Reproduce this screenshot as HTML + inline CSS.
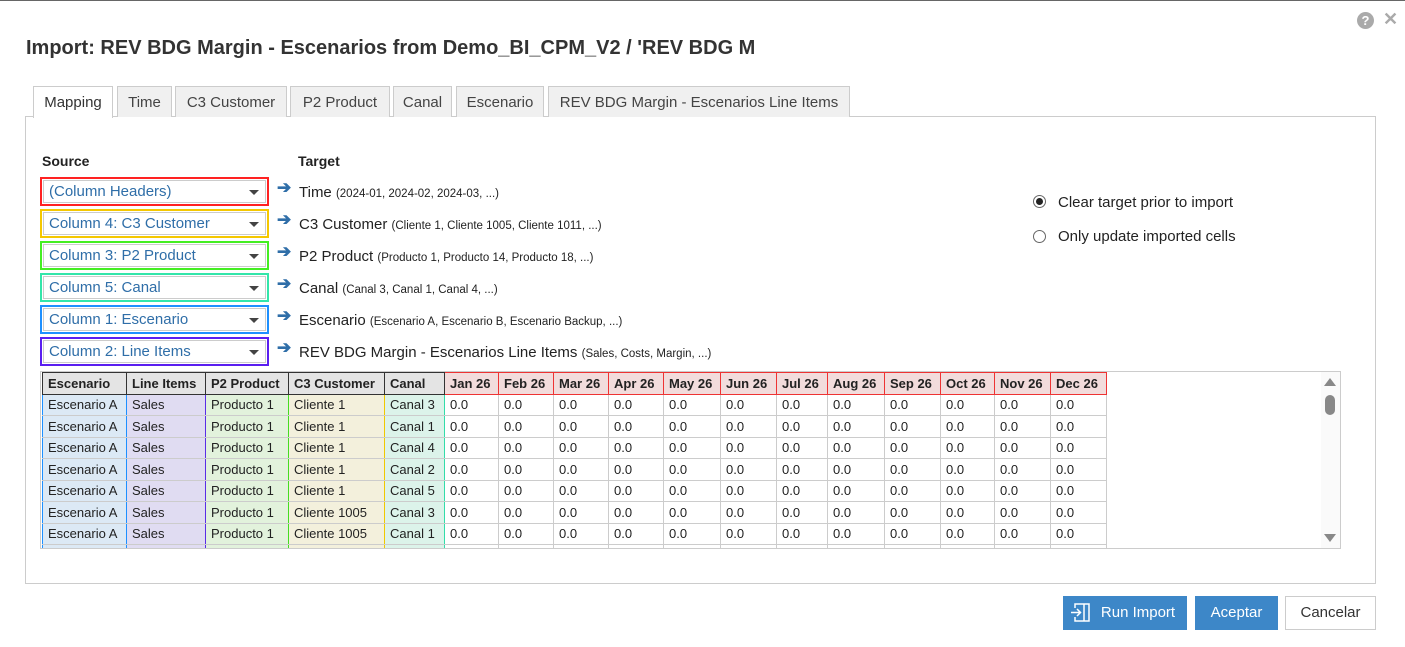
<!DOCTYPE html>
<html><head><meta charset="utf-8"><style>
*{box-sizing:border-box;margin:0;padding:0}
body{width:1405px;height:647px;background:#fff;font-family:"Liberation Sans",Arial,sans-serif;position:relative;overflow:hidden;color:#222}
.a{position:absolute}
.tab{position:absolute;top:86px;height:31px;border:1px solid #ccc;border-bottom:none;background:#f0f0f0;font-size:15px;color:#444;text-align:center;line-height:31px}
.sel{position:absolute;left:40px;width:229px;height:29px;border:2px solid}
.sel div{position:absolute;left:1px;top:1px;right:1px;bottom:1px;border:1px solid #ccc;color:#2f6ea8;font-size:15px;line-height:21px;padding-left:5px}
.sel div:after{content:"";position:absolute;right:6px;top:9px;border-left:5px solid transparent;border-right:5px solid transparent;border-top:5px solid #444}
.arr{position:absolute;left:277px;color:#2f6ea8;font-size:17px;font-weight:bold}
.tg{position:absolute;left:299px;font-size:15px;color:#222}
.tg small{font-size:11.5px}
table{position:absolute;left:42px;top:372px;border-collapse:collapse;font-size:13px}
td,th{border:1px solid #ccc;height:21.5px;padding:0 5px;white-space:nowrap;text-align:left}
th{background:#e4e4e4;border:1px solid #333;font-weight:bold}
th.m{background:#f2dcdc;border-color:#e33}
.c1{background:#dce9f5;border-left:1px solid #1e90ff;border-right:1px solid #1e90ff}
.c2{background:#e0dcf2;border-left:1px solid #5a2ee6;border-right:1px solid #5a2ee6}
.c3{background:#e2f2dc;border-left:1px solid #44dd22;border-right:1px solid #44dd22}
.c4{background:#f3f0dc;border-left:1px solid #f0c800;border-right:1px solid #f0c800}
.c5{background:#dcf3ea;border-left:1px solid #33ddaa;border-right:1px solid #33ddaa}
.btn{position:absolute;top:596px;height:34px;font-size:15px;line-height:30px;padding-top:2px;text-align:center}
</style></head><body>
<div class="a" style="left:0;top:0;width:1405px;height:1px;background:#666"></div>
<div class="a" style="left:1357px;top:12px;width:17px;height:17px;border-radius:50%;background:#aaa;color:#fff;font-size:13px;font-weight:bold;text-align:center;line-height:17px">?</div>
<div class="a" style="left:1383px;top:9px;color:#aaa;font-size:18px;font-weight:bold">✕</div>
<div class="a" style="left:26px;top:37px;font-size:20px;font-weight:bold;color:#333">Import: REV BDG Margin - Escenarios from Demo_BI_CPM_V2 / 'REV BDG M</div>

<div class="a" style="left:25px;top:116px;width:1351px;height:468px;border:1px solid #ccc"></div>
<div class="tab" style="left:33px;width:80px;background:#fff;height:32px;color:#333">Mapping</div>
<div class="tab" style="left:117px;width:55px">Time</div>
<div class="tab" style="left:175px;width:112px">C3 Customer</div>
<div class="tab" style="left:290px;width:100px">P2 Product</div>
<div class="tab" style="left:393px;width:59px">Canal</div>
<div class="tab" style="left:456px;width:88px">Escenario</div>
<div class="tab" style="left:548px;width:302px">REV BDG Margin - Escenarios Line Items</div>

<div class="a" style="left:42px;top:153px;font-size:14px;font-weight:bold">Source</div>
<div class="a" style="left:298px;top:153px;font-size:14px;font-weight:bold">Target</div>

<div class="sel" style="top:177px;border-color:#f22"><div>(Column Headers)</div></div>
<div class="sel" style="top:209px;border-color:#f5c800"><div>Column 4: C3 Customer</div></div>
<div class="sel" style="top:241px;border-color:#44ee22"><div>Column 3: P2 Product</div></div>
<div class="sel" style="top:273px;border-color:#33e6aa"><div>Column 5: Canal</div></div>
<div class="sel" style="top:305px;border-color:#1e90ff"><div>Column 1: Escenario</div></div>
<div class="sel" style="top:337px;border-color:#5a1ef0"><div>Column 2: Line Items</div></div>

<div class="arr" style="top:178px">➔</div><div class="tg" style="top:184px">Time <small>(2024-01, 2024-02, 2024-03, ...)</small></div>
<div class="arr" style="top:210px">➔</div><div class="tg" style="top:216px">C3 Customer <small>(Cliente 1, Cliente 1005, Cliente 1011, ...)</small></div>
<div class="arr" style="top:242px">➔</div><div class="tg" style="top:248px">P2 Product <small>(Producto 1, Producto 14, Producto 18, ...)</small></div>
<div class="arr" style="top:274px">➔</div><div class="tg" style="top:280px">Canal <small>(Canal 3, Canal 1, Canal 4, ...)</small></div>
<div class="arr" style="top:306px">➔</div><div class="tg" style="top:312px">Escenario <small>(Escenario A, Escenario B, Escenario Backup, ...)</small></div>
<div class="arr" style="top:338px">➔</div><div class="tg" style="top:344px">REV BDG Margin - Escenarios Line Items <small>(Sales, Costs, Margin, ...)</small></div>

<div class="a" style="left:1033px;top:195px;width:13px;height:13px;border:1px solid #666;border-radius:50%"><div style="position:absolute;left:2px;top:2px;width:7px;height:7px;border-radius:50%;background:#222"></div></div>
<div class="a" style="left:1058px;top:194px;font-size:15px">Clear target prior to import</div>
<div class="a" style="left:1033px;top:230px;width:13px;height:13px;border:1px solid #666;border-radius:50%"></div>
<div class="a" style="left:1058px;top:228px;font-size:15px">Only update imported cells</div>

<div class="a" style="left:40px;top:371px;width:1301px;height:178px;border:1px solid #ccc;overflow:hidden">
<div class="a" style="right:0;top:0;width:19px;height:176px;background:#fafafa"></div>
<div class="a" style="right:4px;top:6px;border-left:6px solid transparent;border-right:6px solid transparent;border-bottom:8px solid #888"></div>
<div class="a" style="right:5px;top:23px;width:10px;height:20px;border-radius:5px;background:#888"></div>
<div class="a" style="right:4px;top:162px;border-left:6px solid transparent;border-right:6px solid transparent;border-top:8px solid #888"></div>
</div>
<div class="a" style="left:40px;top:371px;width:1281px;height:177px;overflow:hidden">
<table style="left:2px;top:1px">
<tr><th style="width:84px">Escenario</th><th style="width:79px">Line Items</th><th style="width:83px">P2 Product</th><th style="width:96px">C3 Customer</th><th style="width:60px">Canal</th><th class="m" style="width:54px">Jan 26</th><th class="m" style="width:55px">Feb 26</th><th class="m" style="width:55px">Mar 26</th><th class="m" style="width:55px">Apr 26</th><th class="m" style="width:57px">May 26</th><th class="m" style="width:56px">Jun 26</th><th class="m" style="width:51px">Jul 26</th><th class="m" style="width:57px">Aug 26</th><th class="m" style="width:56px">Sep 26</th><th class="m" style="width:54px">Oct 26</th><th class="m" style="width:56px">Nov 26</th><th class="m" style="width:56px">Dec 26</th></tr>
<tr><td class="c1">Escenario A</td><td class="c2">Sales</td><td class="c3">Producto 1</td><td class="c4">Cliente 1</td><td class="c5">Canal 3</td><td>0.0</td><td>0.0</td><td>0.0</td><td>0.0</td><td>0.0</td><td>0.0</td><td>0.0</td><td>0.0</td><td>0.0</td><td>0.0</td><td>0.0</td><td>0.0</td></tr>
<tr><td class="c1">Escenario A</td><td class="c2">Sales</td><td class="c3">Producto 1</td><td class="c4">Cliente 1</td><td class="c5">Canal 1</td><td>0.0</td><td>0.0</td><td>0.0</td><td>0.0</td><td>0.0</td><td>0.0</td><td>0.0</td><td>0.0</td><td>0.0</td><td>0.0</td><td>0.0</td><td>0.0</td></tr>
<tr><td class="c1">Escenario A</td><td class="c2">Sales</td><td class="c3">Producto 1</td><td class="c4">Cliente 1</td><td class="c5">Canal 4</td><td>0.0</td><td>0.0</td><td>0.0</td><td>0.0</td><td>0.0</td><td>0.0</td><td>0.0</td><td>0.0</td><td>0.0</td><td>0.0</td><td>0.0</td><td>0.0</td></tr>
<tr><td class="c1">Escenario A</td><td class="c2">Sales</td><td class="c3">Producto 1</td><td class="c4">Cliente 1</td><td class="c5">Canal 2</td><td>0.0</td><td>0.0</td><td>0.0</td><td>0.0</td><td>0.0</td><td>0.0</td><td>0.0</td><td>0.0</td><td>0.0</td><td>0.0</td><td>0.0</td><td>0.0</td></tr>
<tr><td class="c1">Escenario A</td><td class="c2">Sales</td><td class="c3">Producto 1</td><td class="c4">Cliente 1</td><td class="c5">Canal 5</td><td>0.0</td><td>0.0</td><td>0.0</td><td>0.0</td><td>0.0</td><td>0.0</td><td>0.0</td><td>0.0</td><td>0.0</td><td>0.0</td><td>0.0</td><td>0.0</td></tr>
<tr><td class="c1">Escenario A</td><td class="c2">Sales</td><td class="c3">Producto 1</td><td class="c4">Cliente 1005</td><td class="c5">Canal 3</td><td>0.0</td><td>0.0</td><td>0.0</td><td>0.0</td><td>0.0</td><td>0.0</td><td>0.0</td><td>0.0</td><td>0.0</td><td>0.0</td><td>0.0</td><td>0.0</td></tr>
<tr><td class="c1">Escenario A</td><td class="c2">Sales</td><td class="c3">Producto 1</td><td class="c4">Cliente 1005</td><td class="c5">Canal 1</td><td>0.0</td><td>0.0</td><td>0.0</td><td>0.0</td><td>0.0</td><td>0.0</td><td>0.0</td><td>0.0</td><td>0.0</td><td>0.0</td><td>0.0</td><td>0.0</td></tr>
<tr><td class="c1">&nbsp;</td><td class="c2"></td><td class="c3"></td><td class="c4"></td><td class="c5"></td><td></td><td></td><td></td><td></td><td></td><td></td><td></td><td></td><td></td><td></td><td></td><td></td></tr>
</table>
</div>

<div class="btn" style="left:1063px;width:124px;background:#3d87c8;color:#fff;padding-left:26px">Run Import
<svg class="a" style="left:7px;top:7px" width="20" height="19" viewBox="0 0 20 19" fill="none" stroke="#fff" stroke-width="1.5"><path d="M5 5V1h14v17H5v-4"/><path d="M1 9.5h9M7 6l3.5 3.5L7 13"/><path d="M14 1v17"/></svg></div>
<div class="btn" style="left:1195px;width:83px;background:#3d87c8;color:#fff">Aceptar</div>
<div class="btn" style="left:1285px;width:91px;border:1px solid #ccc;color:#333;line-height:28px">Cancelar</div>
</body></html>
